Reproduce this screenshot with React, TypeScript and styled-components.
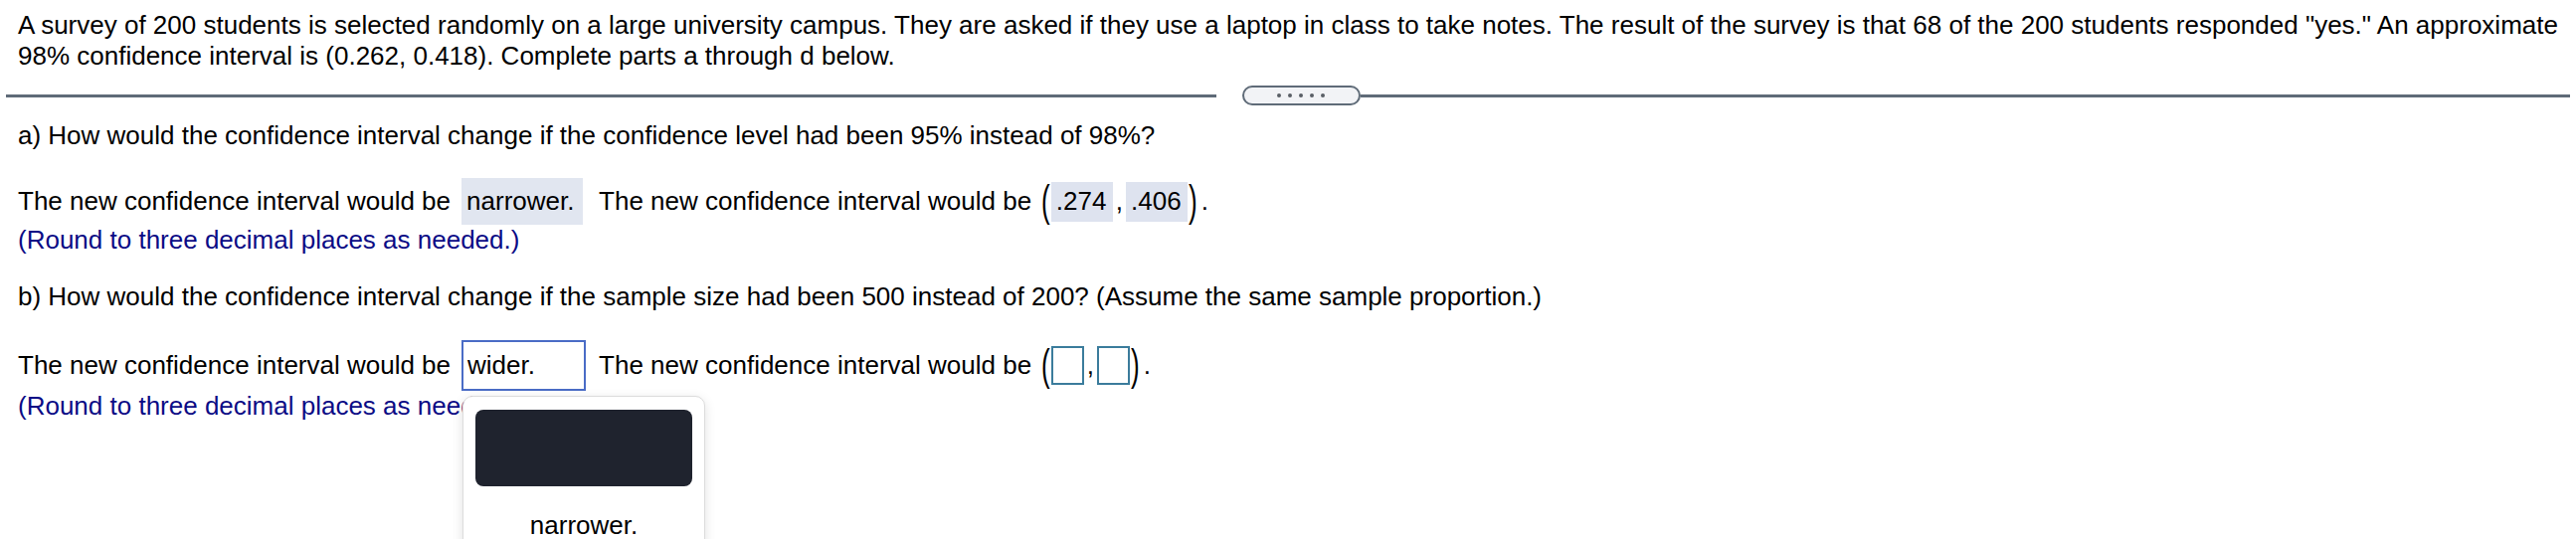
import React from "react";
import styled, { createGlobalStyle } from "styled-components";

const GlobalStyle = createGlobalStyle`
  body {
    margin: 0;
    background: #ffffff;
    font-family: "Liberation Sans", Arial, sans-serif;
    color: #000000;
  }
`;

const Page = styled.div`
  box-sizing: border-box;
  min-height: 100vh;
  padding: 10px 0 0;
  font-size: 26px;
  line-height: 31px;
  overflow: hidden;
`;

const Intro = styled.p`
  margin: 0;
  padding: 0 18px;
`;

const Divider = styled.div`
  display: flex;
  align-items: center;
  margin: 14px 6px 0;
  height: 20px;
`;

const DividerLine = styled.div`
  flex: 1;
  height: 3px;
  background: #5f6b78;
`;

const Pill = styled.div`
  display: flex;
  align-items: center;
  justify-content: center;
  gap: 7px;
  width: 115px;
  height: 16px;
  margin-left: 26px;
  border: 2px solid #5f6b78;
  border-radius: 10px;
  background: #f2f3f6;
`;

const Dot = styled.span`
  width: 4px;
  height: 4px;
  border-radius: 50%;
  background: #5a5f66;
`;

const Section = styled.div`
  padding: 0 18px;
`;

const Question = styled.p<{ $top: number }>`
  margin: ${(p) => p.$top}px 0 0;
`;

const AnswerRow = styled.div<{ $top: number }>`
  display: flex;
  align-items: center;
  margin-top: ${(p) => p.$top}px;
  white-space: nowrap;
`;

const Choice = styled.span<{ $open?: boolean }>`
  position: relative;
  display: inline-flex;
  align-items: center;
  box-sizing: border-box;
  width: ${(p) => (p.$open ? 125 : 122)}px;
  height: ${(p) => (p.$open ? 51 : 47)}px;
  margin: 0 ${(p) => (p.$open ? 13 : 16)}px 0 11px;
  padding-left: ${(p) => (p.$open ? 4 : 5)}px;
  background: ${(p) => (p.$open ? "#ffffff" : "#e1e6f0")};
  border: ${(p) => (p.$open ? "2px solid #4a6cc6" : "none")};
`;

const Paren = styled.span`
  display: inline-block;
  margin: 0 1px 0 10px;
  transform: scaleY(1.7);
  font-weight: 300;
`;

const CloseParen = styled(Paren)`
  margin: 0 4px 0 1px;
`;

const Filled = styled.span`
  display: inline-flex;
  align-items: center;
  box-sizing: border-box;
  width: 62px;
  height: 40px;
  padding-left: 5px;
  background: #dee3ef;
`;

const Empty = styled.span`
  display: inline-block;
  box-sizing: border-box;
  width: 33px;
  height: 39px;
  border: 2px solid #3b7c9c;
`;

const Comma = styled.span`
  margin: 0 3px;
`;

const Hint = styled.p<{ $top: number }>`
  margin: ${(p) => p.$top}px 0 0;
  color: #0b0b85;
`;

const Dropdown = styled.div`
  position: absolute;
  top: calc(100% + 7px);
  left: -1px;
  box-sizing: border-box;
  width: 244px;
  height: 200px;
  padding: 13px 12px 0;
  background: #ffffff;
  border: 1px solid #dcdcdc;
  border-radius: 10px;
  box-shadow: 0 3px 12px rgba(0, 0, 0, 0.12);
  color: #000000;
  z-index: 2;
`;

const DropdownBar = styled.div`
  height: 77px;
  border-radius: 8px;
  background: #1f232e;
`;

const DropdownItem = styled.div`
  margin-top: 24px;
  text-align: center;
`;

function Interval({ values }: { values?: [string, string] }) {
  return (
    <>
      <Paren>(</Paren>
      {values ? <Filled>{values[0]}</Filled> : <Empty />}
      <Comma>,</Comma>
      {values ? <Filled>{values[1]}</Filled> : <Empty />}
      <CloseParen>)</CloseParen>.
    </>
  );
}

export default function App() {
  return (
    <Page>
      <GlobalStyle />
      <Intro>
        A survey of 200 students is selected randomly on a large university campus. They are asked if they use a
        laptop in class to take notes. The result of the survey is that 68 of the 200 students responded "yes." An
        approximate 98% confidence interval is (0.262, 0.418). Complete parts a through d below.
      </Intro>
      <Divider>
        <DividerLine />
        <Pill>
          {[0, 1, 2, 3, 4].map((i) => (
            <Dot key={i} />
          ))}
        </Pill>
        <DividerLine />
      </Divider>
      <Section>
        <Question $top={15}>
          a) How would the confidence interval change if the confidence level had been 95% instead of 98%?
        </Question>
        <AnswerRow $top={27}>
          The new confidence interval would be
          <Choice>narrower.</Choice>
          The new confidence interval would be
          <Interval values={[".274", ".406"]} />
        </AnswerRow>
        <Hint $top={0}>(Round to three decimal places as needed.)</Hint>
        <Question $top={26}>
          b) How would the confidence interval change if the sample size had been 500 instead of 200? (Assume the
          same sample proportion.)
        </Question>
        <AnswerRow $top={28}>
          The new confidence interval would be
          <Choice $open>
            wider.
            <Dropdown>
              <DropdownBar />
              <DropdownItem>narrower.</DropdownItem>
            </Dropdown>
          </Choice>
          The new confidence interval would be
          <Interval />
        </AnswerRow>
        <Hint $top={0}>(Round to three decimal places as needed.)</Hint>
      </Section>
    </Page>
  );
}
